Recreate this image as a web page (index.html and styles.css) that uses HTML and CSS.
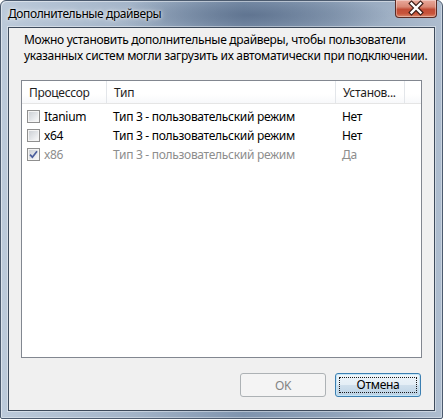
FILE: index.html
```html
<!DOCTYPE html>
<html lang="ru">
<head>
<meta charset="utf-8">
<title>Дополнительные драйверы</title>
<link rel="stylesheet" href="styles.css">
</head>
<body>
<div class="window">
  <div class="titlebar">
    <span class="title">Дополнительные драйверы</span>
    <div class="close">
      <svg width="42" height="18" viewBox="0 0 42 18">
        <path d="M16.5 4.5 L25.5 13.5 M25.5 4.5 L16.5 13.5" stroke="#3a1c17" stroke-width="4.6" stroke-linecap="square" fill="none"/>
        <path d="M16.5 4.5 L25.5 13.5 M25.5 4.5 L16.5 13.5" stroke="#ffffff" stroke-width="2.4" stroke-linecap="square" fill="none"/>
      </svg>
    </div>
  </div>
  <div class="client">
    <p class="intro">Можно установить дополнительные драйверы, чтобы пользователи<br>указанных систем могли загрузить их автоматически при подключении.</p>
    <div class="list">
      <div class="grid header">
        <div class="hcell">Процессор</div>
        <div class="hcell">Тип</div>
        <div class="hcell">Установ...</div>
        <div class="hcell last"></div>
      </div>
      <div class="rows">
        <div class="grid row">
          <div class="cell first"><span class="cb"></span>Itanium</div>
          <div class="cell">Тип 3 - пользовательский режим</div>
          <div class="cell">Нет</div>
        </div>
        <div class="grid row">
          <div class="cell first"><span class="cb"></span>x64</div>
          <div class="cell">Тип 3 - пользовательский режим</div>
          <div class="cell">Нет</div>
        </div>
        <div class="grid row disabled">
          <div class="cell first"><span class="cb checked"><svg width="9" height="9" viewBox="0 0 9 9"><path d="M1 4.6 L3.4 7.2 L8 1.2" stroke="#4a5d9c" stroke-width="1.7" fill="none"/></svg></span>x86</div>
          <div class="cell">Тип 3 - пользовательский режим</div>
          <div class="cell">Да</div>
        </div>
      </div>
    </div>
    <div class="buttons">
      <button class="btn btn-disabled" disabled>OK</button>
      <button class="btn btn-default"><span class="focus">Отмена</span></button>
    </div>
  </div>
</div>
</body>
</html>
```

FILE: styles.css
```css
html, body {
  margin: 0;
  padding: 0;
  background: #ffffff;
}

body {
  width: 443px;
  height: 419px;
  overflow: hidden;
  font-family: "Noto Sans", "Open Sans", sans-serif;
  font-size: 12px;
  letter-spacing: -0.3px;
  color: #000;
}

.window {
  box-sizing: border-box;
  width: 443px;
  height: 419px;
  padding: 0 7px 7px 7px;
  border: 1px solid #4b5a6e;
  border-radius: 6px 6px 2px 2px;
  display: flex;
  flex-direction: column;
  background:
    radial-gradient(ellipse 140px 22px at 250px 14px, rgba(70, 90, 120, 0.55), rgba(70, 90, 120, 0) 100%),
    linear-gradient(90deg, #bccada 0%, #a3b4c8 30%, #7f94ae 55%, #8fa2b9 75%, #aebdcf 100%);
  box-shadow: inset 1px 1px 0 rgba(255,255,255,0.45), inset -1px -1px 0 rgba(255,255,255,0.35);
}

.titlebar {
  height: 26px;
  flex: none;
  display: flex;
  align-items: flex-start;
  position: relative;
}

.title {
  margin-top: 5px;
  font-size: 12px;
  letter-spacing: -0.4px;
  line-height: 15px;
  text-shadow: 0 0 6px rgba(255,255,255,0.9), 0 0 3px rgba(255,255,255,0.8);
}

.close {
  position: absolute;
  right: -2px;
  top: -1px;
  width: 42px;
  height: 18px;
  box-sizing: border-box;
  border: 1px solid #5b2b24;
  border-top: none;
  border-radius: 0 0 4px 4px;
  background: linear-gradient(180deg, #e9a99b 0%, #d98875 40%, #c24d36 55%, #c8543b 80%, #d98a6e 100%);
  box-shadow: inset 0 0 0 1px rgba(255,255,255,0.35);
}

.close svg {
  display: block;
  margin: -1px 0 0 -1px;
}

.client {
  flex: 1;
  box-sizing: border-box;
  border: 1px solid #3e4b5c;
  background: #f0f0f0;
  display: flex;
  flex-direction: column;
  padding: 4px 12px 0 14px;
  box-shadow: 0 0 0 1px rgba(255,255,255,0.4);
}

.intro {
  margin: 0 0 0 1px;
  line-height: 16px;
  white-space: nowrap;
}

.list {
  margin: 16px 0 0 -2px;
  height: 278px;
  box-sizing: border-box;
  border: 1px solid #828790;
  background: #ffffff;
}

.grid {
  display: grid;
  grid-template-columns: 85px 229px 69px 1fr;
}

.header {
  height: 23px;
  box-sizing: border-box;
  border-bottom: 1px solid #e5e5e5;
  background: linear-gradient(180deg, #ffffff 0%, #ffffff 60%, #f7f8fa 100%);
}

.hcell {
  line-height: 22px;
  padding: 1px 0 0 7px;
  border-right: 1px solid #e3e6ea;
  color: #1e1e1e;
  white-space: nowrap;
  overflow: hidden;
}

.hcell.last {
  border-right: none;
}

.rows {
  padding-top: 3px;
}

.row {
  height: 19px;
}

.cell {
  line-height: 19px;
  padding-left: 6px;
  white-space: nowrap;
  display: flex;
  align-items: center;
}

.cell.first {
  padding-left: 5px;
}

.row.disabled .cell {
  color: #8d8d8d;
}

.cb {
  box-sizing: border-box;
  width: 13px;
  height: 13px;
  border: 1px solid #8f8f8f;
  padding: 1px;
  background: #f4f4f4;
  margin-right: 4px;
  flex: none;
  display: flex;
}

.cb::before {
  content: "";
  display: block;
  width: 9px;
  height: 9px;
  background: linear-gradient(135deg, #cdd1d6 0%, #e6e8eb 60%, #f8f8f8 100%);
}

.cb.checked {
  position: relative;
}

.cb.checked svg {
  position: absolute;
  left: 1px;
  top: 1px;
}

.buttons {
  margin-top: 15px;
  display: flex;
  justify-content: flex-end;
  gap: 9px;
  padding-right: 1px;
}

.btn {
  box-sizing: border-box;
  width: 86px;
  height: 24px;
  padding: 0;
  font-family: "Noto Sans", "Open Sans", sans-serif;
  font-size: 12px;
  letter-spacing: -0.3px;
  border-radius: 3px;
  display: flex;
  align-items: center;
  justify-content: center;
}

.btn-disabled {
  border: 1px solid #adb2b5;
  background: #f4f4f4;
  color: #838383;
}

.btn-default {
  border: 1px solid #3c7fb1;
  color: #000;
  background: linear-gradient(180deg, #eef5fa 0%, #e4eef6 48%, #cfdfec 52%, #bcd3e6 100%);
  box-shadow: inset 0 0 0 1px #c4e5f6;
}

.focus {
  box-sizing: border-box;
  width: 78px;
  height: 16px;
  border: 1px dotted #1a1a1a;
  display: flex;
  align-items: center;
  justify-content: center;
  line-height: 14px;
}
```
